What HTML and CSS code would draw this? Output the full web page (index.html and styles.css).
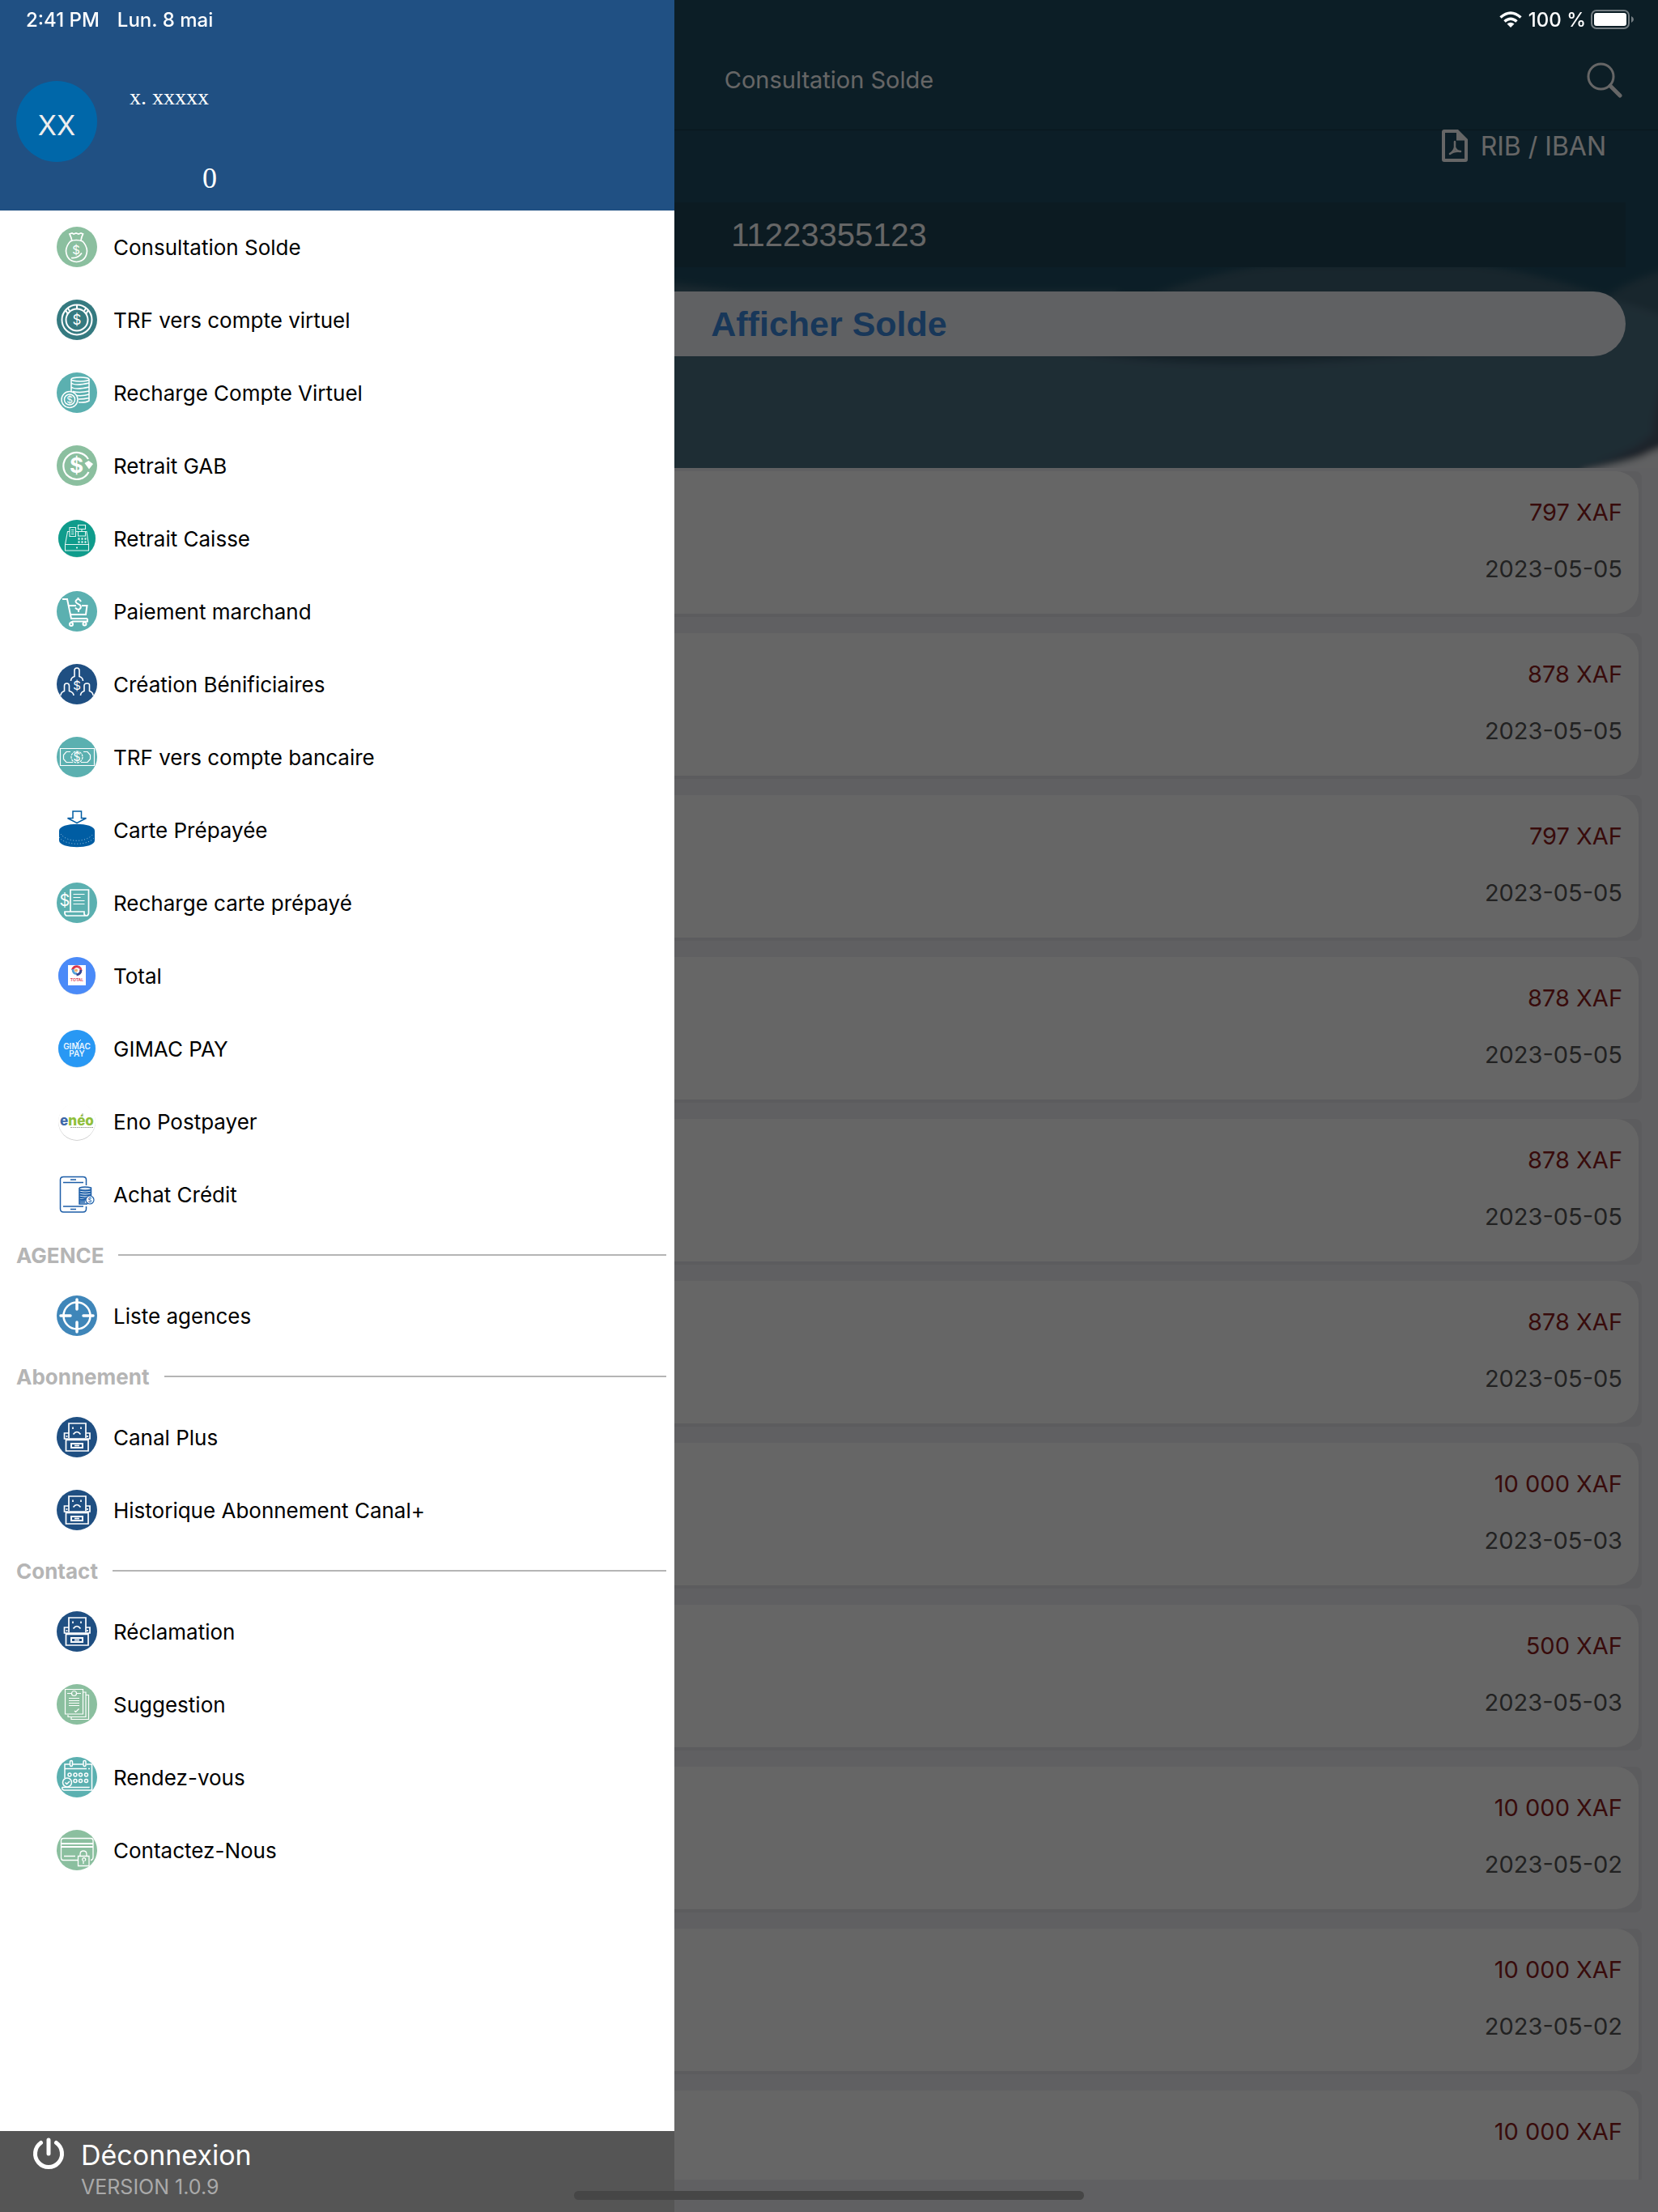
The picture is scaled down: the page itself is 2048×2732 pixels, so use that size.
FILE: index.html
```html
<!DOCTYPE html>
<html lang="fr">
<head>
<meta charset="utf-8">
<meta name="viewport" content="width=device-width, initial-scale=1">
<title>Consultation Solde</title>
<link rel="stylesheet" href="styles.css">
</head>
<body>
<svg class="sprite" aria-hidden="true">
  <symbol id="terminal" viewBox="0 0 50 50">
    <circle cx="25" cy="25" r="25" fill="#1f4f82"/>
    <g fill="none" stroke="#fff" stroke-width="1.700">
      <path d="M15 26V8h21v18M15 20H9.500v7H41v-7h-5M12.500 23v2M38 23v2M11.500 28.500h27.500V42H11.500z"/>
      <path d="M20 12.500v2.500M30 12.500v2.500M20.500 21.500q4.500-6 9 0" />
      <path d="M18 33h14v5H18z" stroke-width="2"/>
      <path d="M22 35.500h6"/>
    </g>
  </symbol>
</svg>

<div class="app">
  <header class="navbar">
    <h1 class="navbar-title">Consultation Solde</h1>
    <button class="icon-button" type="button" aria-label="Rechercher">
      <svg width="44" height="44" viewBox="0 0 44 44" fill="none" stroke="#fff" stroke-linecap="round"><circle cx="17.500" cy="17.500" r="15.500" stroke-width="3"/><path d="M29 29l12 12" stroke-width="5"/></svg>
    </button>
  </header>

  <section class="hero">
    <svg class="hero-waves" viewBox="0 0 2048 418" preserveAspectRatio="none" aria-hidden="true">
      <defs><filter id="soft" x="-5%" y="-5%" width="110%" height="110%"><feGaussianBlur stdDeviation="4"/></filter></defs>
      <g filter="url(#soft)">
        <path d="M0 150Q600 150 950 205L1420 205Q1520 166 1600 166L1820 166Q1900 176 1985 206Q2010 186 2070 168V440H-20V150Z" fill="#3c5e70"/>
        <path d="M-20 200H1380L1400 275Q1520 300 1760 278L1960 206Q2010 210 2070 236V440H-20Z" fill="#4d7082"/>
        <path d="M1330 275Q1520 303 1740 275Z" fill="#345265"/>
        <path d="M2070 260Q2042 340 2042 376Q2015 400 1970 412L2070 400Z" fill="#49596a"/>
        <path d="M1955 422Q2020 410 2036 400L2070 386V440H1955Z" fill="#f2f3f6"/>
      </g>
    </svg>
    <a class="rib-link" href="#rib">
      <svg width="32" height="40" viewBox="0 0 32 40"><path fill="#fff" fill-rule="evenodd" d="M3 0H20L32 12V37a3 3 0 0 1-3 3H3a3 3 0 0 1-3-3V3a3 3 0 0 1 3-3zM4 4V36H28V13.500H18V4z"/><path d="M16 15v7M16 22q-1 5-6 8M16 22q2 5 7 5M10 30q5-4 13-3" fill="none" stroke="#fff" stroke-width="2.500" stroke-linecap="round"/></svg>
      <span>RIB / IBAN</span>
    </a>
    <p class="account">11223355123</p>
    <button class="show-balance" type="button">Afficher Solde</button>
  </section>

  <ul class="operations">
    <li class="operation"><div class="operation-body"><span class="amount">797 XAF</span><time datetime="2023-05-05">2023-05-05</time></div></li>
    <li class="operation"><div class="operation-body"><span class="amount">878 XAF</span><time datetime="2023-05-05">2023-05-05</time></div></li>
    <li class="operation"><div class="operation-body"><span class="amount">797 XAF</span><time datetime="2023-05-05">2023-05-05</time></div></li>
    <li class="operation"><div class="operation-body"><span class="amount">878 XAF</span><time datetime="2023-05-05">2023-05-05</time></div></li>
    <li class="operation"><div class="operation-body"><span class="amount">878 XAF</span><time datetime="2023-05-05">2023-05-05</time></div></li>
    <li class="operation"><div class="operation-body"><span class="amount">878 XAF</span><time datetime="2023-05-05">2023-05-05</time></div></li>
    <li class="operation"><div class="operation-body"><span class="amount">10 000 XAF</span><time datetime="2023-05-03">2023-05-03</time></div></li>
    <li class="operation"><div class="operation-body"><span class="amount">500 XAF</span><time datetime="2023-05-03">2023-05-03</time></div></li>
    <li class="operation"><div class="operation-body"><span class="amount">10 000 XAF</span><time datetime="2023-05-02">2023-05-02</time></div></li>
    <li class="operation"><div class="operation-body"><span class="amount">10 000 XAF</span><time datetime="2023-05-02">2023-05-02</time></div></li>
    <li class="operation"><div class="operation-body"><span class="amount">10 000 XAF</span></div></li>
  </ul>
</div>

<div class="scrim"></div>

<nav class="drawer" aria-label="Menu principal">
  <header class="profile">
    <div class="avatar">XX</div>
    <div class="profile-text">
      <p class="profile-name">x. xxxxx</p>
      <p class="profile-count">0</p>
    </div>
  </header>

  <div class="menu">
    <a class="menu-item" href="#solde">
      <svg class="menu-icon" viewBox="0 0 50 50"><circle cx="25" cy="25" r="25" fill="#8bbf9f"/><g fill="none" stroke="#fff" stroke-width="1.700"><path d="M19 18q-1-5-3-9l3-1 2 1 3-1 3 1 3-1 2.500 1q-2 4-2.500 8"/><path d="M17 18q7-3 15 0q5 5 5.500 12q-1 12.500-13 13.500q-12-1-13-13.500q.5-7 5.500-12z"/><path d="M18 38.500q8 1 13-6"/></g><text class="coin" x="24" y="34" font-size="15">$</text></svg>
      <span>Consultation Solde</span></a>
    <a class="menu-item" href="#virtuel">
      <svg class="menu-icon" viewBox="0 0 50 50"><circle cx="25" cy="25" r="25" fill="#357a80"/><g fill="none" stroke="#fff" stroke-width="2"><circle cx="25" cy="25" r="18.500"/><circle cx="25" cy="25" r="13.500"/><path d="M25 7v5M11 13l3 5M39 13l-3 5M14 11l2 3M36 11l-2 3"/></g><text class="coin" x="25" y="31" font-size="17">$</text></svg>
      <span>TRF vers compte virtuel</span></a>
    <a class="menu-item" href="#recharge">
      <svg class="menu-icon" viewBox="0 0 50 50"><circle cx="25" cy="25" r="25" fill="#5bb0b0"/><g fill="none" stroke="#fff" stroke-width="1.500"><ellipse cx="29" cy="8.500" rx="11" ry="2.500"/><path d="M18 8.500V24M40 8.500V35q-4 2.500-13 2M18 13q5 4 22 0M18 18q5 4 22 0M20 23.500q9 2 20-.5M25 28.500q8 1 15-1.500M27 33q7 0 13-1.500"/><circle cx="16" cy="33.500" r="10"/><circle cx="16" cy="33.500" r="6.500"/></g><text class="coin" x="16" y="38" font-size="12">$</text></svg>
      <span>Recharge Compte Virtuel</span></a>
    <a class="menu-item" href="#gab">
      <svg class="menu-icon" viewBox="0 0 50 50"><circle cx="25" cy="25" r="25" fill="#8bbf9f"/><path d="M39 17a16.500 16.500 0 1 0 .5 16" fill="none" stroke="#fff" stroke-width="2.200"/><path d="M34.500 22l5-3 5.500 4-5 6.500z" fill="#fff"/><text class="coin" x="24.500" y="34" font-size="26" font-weight="700">$</text></svg>
      <span>Retrait GAB</span></a>
    <a class="menu-item" href="#caisse">
      <svg class="menu-icon" viewBox="0 0 50 50"><circle cx="25" cy="25.500" r="23" fill="#b9cfcc"/><circle cx="25" cy="25" r="23" fill="#0f9c8c"/><g fill="none" stroke="#e4f5f2" stroke-width="1.100"><path d="M10.500 32.500h29V40h-29zM10.500 32.500l3-16H16M24 16.500h3M35 16.500h2l2.500 16M16 11.500h7.500v11H16zM18 14.500h3.500M18 17h3.500M18 19.500h3.500M26.500 8.500h9v5h-9zM31 13.500v3M26.500 16.500h9v5.500h-9z"/><path d="M26.500 25.500h10M26.500 29.500h10" stroke-width="2.500" stroke-dasharray="2 2"/></g><circle cx="25" cy="36.500" r="1" fill="#fff"/></svg>
      <span>Retrait Caisse</span></a>
    <a class="menu-item" href="#marchand">
      <svg class="menu-icon" viewBox="0 0 50 50"><circle cx="25" cy="25" r="25" fill="#5bb0b0"/><g fill="none" stroke="#fff" stroke-width="2"><path d="M7 10h6l5 24h20M14.500 18H24M31 18h6.500L36 29H17M38 34v3.500H20l-3 1.500"/><circle cx="18" cy="41" r="2"/><circle cx="34.500" cy="40.500" r="2"/><path d="M30 13q-2-4-5-2.500q-3 2 0 4.500l4 2.500q2 3-1 5q-3 1-5-2M26.500 8v3M27 22v4"/></g></svg>
      <span>Paiement marchand</span></a>
    <a class="menu-item" href="#beneficiaires">
      <svg class="menu-icon" viewBox="0 0 50 50"><circle cx="25" cy="25" r="25" fill="#1f4f82"/><g fill="none" stroke="#fff" stroke-width="1.600"><path d="M17.500 21q0-4 4.500-5.500V8q0-3 3-3t3 3v7.500q4.500 1.500 4.500 5.500M5 39q0-4 4.500-5.500V27q0-3 3-3t3 3v6.500Q21 35 21 39M29.500 39q0-4 4.500-5.500V27q0-3 3.500-3t3 3v6.500Q45 35 45 39"/></g><text class="coin" x="25" y="31.500" font-size="15">$</text></svg>
      <span>Création Bénificiaires</span></a>
    <a class="menu-item" href="#bancaire">
      <svg class="menu-icon" viewBox="0 0 50 50"><circle cx="25" cy="25" r="25" fill="#5bb0b0"/><g fill="none" stroke="#fff" stroke-width="1.200"><path d="M4.500 14.500h42v21h-42zM17 18.500h-5l-3.500 4v5l3.500 4h8M33 18.500h5l3.500 4v5l-3.500 4h-8"/><circle cx="25" cy="25" r="7" stroke-dasharray="3 1"/></g><text class="coin" x="25" y="30" font-size="14">$</text></svg>
      <span>TRF vers compte bancaire</span></a>
    <a class="menu-item" href="#carte">
      <svg class="menu-icon" viewBox="0 0 50 50"><path d="M20 2h10.500v8.500H36.500L25 16.500 13.500 10.500H20z" fill="none" stroke="#005da3" stroke-width="1.500"/><path d="M3 26c0-11 44-11 44 0v12c0 11-44 11-44 0z" fill="#005da3"/><path d="M5 30c8 11 32 11 40 0M3 34c8 11 36 11 44 0" fill="none" stroke="#fff" stroke-width=".6" stroke-dasharray="1 2.500"/></svg>
      <span>Carte Prépayée</span></a>
    <a class="menu-item" href="#recharge-carte">
      <svg class="menu-icon" viewBox="0 0 50 50"><circle cx="25" cy="25" r="25" fill="#5bb0b0"/><g fill="none" stroke="#fff" stroke-width="1.700"><path d="M17 36V9h22.500v29q-.5 3-3 3H12q-2.500-1.500-2-5h24v3q1 2 2.500 2"/><path d="M20.500 14.500h14M20.500 18.500h9M20.500 22.500h14M20.500 26.500h14" stroke-width="1.200"/></g><text class="coin" x="10" y="29" font-size="20">$</text></svg>
      <span>Recharge carte prépayé</span></a>
    <a class="menu-item" href="#total">
      <svg class="menu-icon" viewBox="0 0 50 50"><circle cx="25" cy="25.500" r="23" fill="#c3cfe6"/><circle cx="25" cy="25" r="23" fill="#4a8af8"/><path d="M14 12h22v25H14z" fill="#fff"/><g fill="none" stroke-width="2.800"><path d="M19.500 18a5.500 5.500 0 0 1 9-3" stroke="#d9354a"/><path d="M26 14q5 1 3.500 6" stroke="#e1495d"/><path d="M20 17q0 6 5 5.500" stroke="#52a0d8"/><path d="M30 18q0 5-5.500 6" stroke="#37468e"/></g><circle cx="24" cy="18.500" r="2" fill="#f5b06a"/><text x="25" y="32" font-size="5" font-weight="700" text-anchor="middle" fill="#e04a5a">TOTAL</text></svg>
      <span>Total</span></a>
    <a class="menu-item" href="#gimac">
      <svg class="menu-icon" viewBox="0 0 50 50"><circle cx="25" cy="25.500" r="23" fill="#b8cfe2"/><circle cx="25" cy="25" r="23" fill="#2898f4"/><path d="M24 17l1 2 5-5" fill="none" stroke="#fff"/><g fill="#e9f5ff" text-anchor="middle" font-weight="600"><text x="25" y="26" font-size="10">GIMAC</text><text x="25" y="35" font-size="10">PAY</text></g></svg>
      <span>GIMAC PAY</span></a>
    <a class="menu-item" href="#eno">
      <svg class="menu-icon" viewBox="0 0 50 50"><circle cx="25" cy="25.800" r="23" fill="#c4c4c4"/><circle cx="25" cy="25" r="23" fill="#fff"/><text x="25" y="30" font-size="17" font-weight="800" text-anchor="middle" fill="#8fbf3a"><tspan fill="#3d67a8">e</tspan>néo</text><path d="M32 19v-4M17 32.500h28" stroke="#8c9482" stroke-width=".8" stroke-dasharray="2 .6"/></svg>
      <span>Eno Postpayer</span></a>
    <a class="menu-item" href="#credit">
      <svg class="menu-icon" viewBox="0 0 50 50"><g fill="none" stroke="#1d5ea8" stroke-width="1.500"><path d="M36.500 14V7q0-3.500-4-3.500H8.500q-4 0-4 3.500V43q0 4 4 4h24q4 0 4-4v-3M8 10.500h25M17 7h7M8 40h25M17 43.500h7"/><path d="M28 17q7-2 14.500 0v13M28 17v20h10" fill="#dce8f4"/><path d="M28 19.500q7 2 14.500 0M28 22.500q7 2 14.500 0M28 25.500q7 2 14.500 0M28 28.500q7 2 13 0M28 31.500q4 1 8 0M28 34.500h7" stroke-width="2"/><circle cx="41" cy="32" r="5" fill="#fff" stroke-width="1.200"/></g><text x="41" y="35" font-size="8" text-anchor="middle" fill="#1d5ea8">$</text></svg>
      <span>Achat Crédit</span></a>

    <h2 class="menu-heading">AGENCE</h2>
    <a class="menu-item" href="#agences">
      <svg class="menu-icon" viewBox="0 0 50 50"><circle cx="25" cy="25" r="25" fill="#3f86b9"/><g fill="none" stroke="#fff"><circle cx="25" cy="25" r="16.500" stroke-width="2.500"/><path d="M25 5v12M25 33v12M5 25h12M33 25h12" stroke-width="3.500" stroke-linecap="round"/></g></svg>
      <span>Liste agences</span></a>

    <h2 class="menu-heading">Abonnement</h2>
    <a class="menu-item" href="#canal"><svg class="menu-icon"><use href="#terminal"/></svg><span>Canal Plus</span></a>
    <a class="menu-item" href="#historique"><svg class="menu-icon"><use href="#terminal"/></svg><span>Historique Abonnement Canal+</span></a>

    <h2 class="menu-heading">Contact</h2>
    <a class="menu-item" href="#reclamation"><svg class="menu-icon"><use href="#terminal"/></svg><span>Réclamation</span></a>
    <a class="menu-item" href="#suggestion">
      <svg class="menu-icon" viewBox="0 0 50 50"><circle cx="25" cy="25" r="25" fill="#8bbf9f"/><g fill="none" stroke="#fff" stroke-width="1.200"><path d="M10.500 6.500h22v30.500h-22zM33 10h3v30.500H14V38M36 13.500h3.500v30H18V41M15 17.500h13M15 20.500h13M15 23.500h13M15 26.500h13M13 11.500h5M25 11.500h5M22 33l1.500 1.500 4-4"/><circle cx="21.500" cy="11.500" r="3"/></g></svg>
      <span>Suggestion</span></a>
    <a class="menu-item" href="#rendez-vous">
      <svg class="menu-icon" viewBox="0 0 50 50"><circle cx="25" cy="25" r="25" fill="#5bb0b0"/><g fill="none" stroke="#fff" stroke-width="1.500"><path d="M10 26V9h6M20 9h12.500M37 9h6.500v32H9q-3-1-2-3.500h33V38M10 14.500h27M39 14.500h2"/><rect x="16.500" y="4.500" width="3" height="7" rx="1.500"/><rect x="33" y="4.500" width="3" height="7" rx="1.500"/><circle cx="16" cy="22" r="2"/><circle cx="23" cy="22" r="2"/><circle cx="29.500" cy="22" r="2"/><circle cx="36.500" cy="22" r="2"/><circle cx="23" cy="29.500" r="2"/><circle cx="29.500" cy="29.500" r="2"/><circle cx="36.500" cy="29.500" r="2"/><circle cx="13" cy="31.500" r="5.500" fill="#5bb0b0"/><path d="M10.500 31.500l2 2 3.500-3.500"/></g></svg>
      <span>Rendez-vous</span></a>
    <a class="menu-item" href="#contact">
      <svg class="menu-icon" viewBox="0 0 50 50"><circle cx="25" cy="25" r="25" fill="#8bbf9f"/><g fill="none" stroke="#fff" stroke-width="1.300"><path d="M26 37.500H8q-2.500 0-2.500-3V13q0-2.500 3-2.500h33.500q3 0 3 2.500v21q0 3-3 3.500M9 32.500h14"/><path d="M5.500 17h39.500M5.500 21h39.500" stroke-width="1.800"/><path d="M29 32v-2q0-4 4-4t4 4v2"/><path d="M26.500 32.500h13.500v12H26.500z" fill="#8bbf9f"/><path d="M33 42v-3.500a2 2 0 1 1 1.500 0"/></g></svg>
      <span>Contactez-Nous</span></a>
  </div>

  <footer class="drawer-footer">
    <button class="logout" type="button">
      <svg width="40" height="40" viewBox="0 0 40 40" fill="none" stroke="#fff" stroke-width="5" stroke-linecap="round"><path d="M20 3v17M10.500 6.500a16.500 16.500 0 1 0 19 0"/></svg>
      <span>Déconnexion</span>
    </button>
    <p class="version">VERSION 1.0.9</p>
  </footer>
</nav>

<div class="status-bar">
  <span>2:41 PM</span>
  <span>Lun. 8 mai</span>
  <svg class="status-wifi" width="28" height="20" viewBox="0 0 28 20" aria-hidden="true"><g fill="none" stroke="#fff" stroke-width="3.500"><path d="M1.500 7.500Q14-3.500 26.500 7.500"/><path d="M6.500 12.500Q14 6 21.500 12.500"/></g><path d="M9.500 15.500Q14 12 18.500 15.500L14 20z" fill="#fff"/></svg>
  <span>100 %</span>
  <svg width="53" height="24" viewBox="0 0 53 24" aria-hidden="true"><rect x="1" y="1" width="46" height="22" rx="6" fill="none" stroke="#747d82" stroke-width="2"/><rect x="4" y="4" width="40" height="16" rx="3" fill="#fff"/><path d="M50 8q3 1.500 3 4t-3 4z" fill="#747d82"/></svg>
</div>
<div class="home-indicator"></div>
</body>
</html>
```

FILE: styles.css
```css
* {
  box-sizing: border-box;
  margin: 0;
}

body {
  background: #efeff4;
  color: #000;
  font-family: Inter, "Noto Sans", sans-serif;
  font-size: 26px;
}

button {
  border: 0;
  padding: 0;
  background: none;
  color: inherit;
  font: inherit;
}

a {
  color: inherit;
  text-decoration: none;
}

.sprite {
  position: absolute;
  width: 0;
  height: 0;
}

/* Account page */
.app {
  display: flex;
  flex-direction: column;
  height: 100vh;
  padding-bottom: 40px;
}

.navbar {
  display: grid;
  grid-template-columns: 1fr auto 1fr;
  align-items: center;
  flex: none;
  height: 160px;
  padding: 38px 44px 0;
  background: #204b5f;
  color: #fff;
}

.navbar-title {
  grid-column: 2;
  font-size: 29px;
  font-weight: 400;
  line-height: 40px;
}

.icon-button {
  display: flex;
  justify-self: end;
}

.hero {
  position: relative;
  display: flex;
  flex-direction: column;
  flex: none;
  padding: 0 40px 138px;
  border-top: 1px solid #18384a;
  background: #204d62;
  color: #fff;
}

.hero-waves {
  position: absolute;
  inset: 0;
  width: 100%;
  height: 100%;
}

.rib-link {
  position: relative;
  display: flex;
  align-items: center;
  align-self: flex-end;
  gap: 16px;
  height: 38px;
  margin: 0 24px 51px;
  font-size: 32px;
}

.account {
  position: relative;
  background: #204455;
  font: 40px/80px "Liberation Sans", Arial, sans-serif;
  text-align: center;
}

.show-balance {
  position: relative;
  height: 80px;
  margin-top: 30px;
  border-radius: 40px;
  background: #f0f2f7;
  color: #3c8ade;
  font: bold 43px/80px "Liberation Sans", Arial, sans-serif;
}

.operations {
  display: flex;
  flex: 1;
  flex-direction: column;
  gap: 20px;
  min-height: 0;
  overflow: hidden;
  padding: 4px 20px 0;
  list-style: none;
}

.operation {
  flex: none;
  padding: 0 4px 4px;
  border-radius: 8px;
  background: #e6e6ea;
}

.operation-body {
  display: flex;
  flex-direction: column;
  align-items: flex-end;
  gap: 30px;
  height: 176px;
  padding: 31px 20px;
  border-radius: 28px;
  background: #fff;
  color: #555;
  font-size: 29px;
  line-height: 40px;
}

.amount {
  color: #8c1c1c;
}

.scrim {
  position: fixed;
  inset: 0;
  background: rgba(0, 0, 0, 0.6);
}

/* Side menu */
.drawer {
  position: fixed;
  top: 0;
  bottom: 0;
  left: 0;
  display: flex;
  flex-direction: column;
  width: 833px;
  max-width: 85vw;
  background: #fff;
}

.profile {
  display: flex;
  flex: none;
  gap: 40px;
  height: 260px;
  padding: 100px 20px 0;
  background: #205083;
  color: #fff;
}

.avatar {
  width: 100px;
  height: 100px;
  border-radius: 50%;
  background: #0067a9;
  color: #eee;
  font-size: 34px;
  line-height: 110px;
  text-align: center;
}

.profile-text {
  font-family: "Liberation Serif", "Times New Roman", serif;
}

.profile-name {
  font-size: 28px;
  line-height: 40px;
}

.profile-count {
  margin: 60px 0 0 90px;
  font-size: 36px;
  line-height: 40px;
}

.menu {
  flex: 1;
  min-height: 0;
  overflow: hidden;
}

.menu-item {
  display: flex;
  align-items: center;
  gap: 20px;
  height: 90px;
  padding-left: 70px;
}

.menu-icon {
  width: 50px;
  height: 50px;
}

.coin {
  fill: #fff;
  text-anchor: middle;
}

.menu-heading {
  display: flex;
  align-items: center;
  gap: 18px;
  height: 60px;
  padding: 0 10px 0 20px;
  color: #b5b5b5;
  font-size: 26px;
  font-weight: 700;
}

.menu-heading::after {
  flex: 1;
  height: 2px;
  background: #b5b5b5;
  content: "";
}

.drawer-footer {
  flex: none;
  height: 100px;
  padding: 8px 40px;
  background: #555;
  color: #fff;
}

.logout {
  display: flex;
  align-items: flex-start;
  gap: 20px;
  font-size: 34px;
  line-height: 44px;
}

.version {
  margin-left: 60px;
  color: #aaa;
  font-size: 25px;
  line-height: 34px;
}

/* System chrome */
.status-bar {
  position: fixed;
  top: 0;
  right: 0;
  left: 0;
  display: flex;
  align-items: center;
  height: 48px;
  padding: 0 30px 0 32px;
  color: #fff;
  font-size: 24px;
  font-weight: 500;
}

.status-bar span + span {
  margin-left: 22px;
}

.status-bar span:last-of-type {
  margin: 0 6px 0 8px;
}

.status-wifi {
  margin-left: auto;
}

.home-indicator {
  position: fixed;
  bottom: 15px;
  left: 50%;
  width: 630px;
  height: 11px;
  margin-left: -315px;
  border-radius: 6px;
  background: #464646;
}
```
